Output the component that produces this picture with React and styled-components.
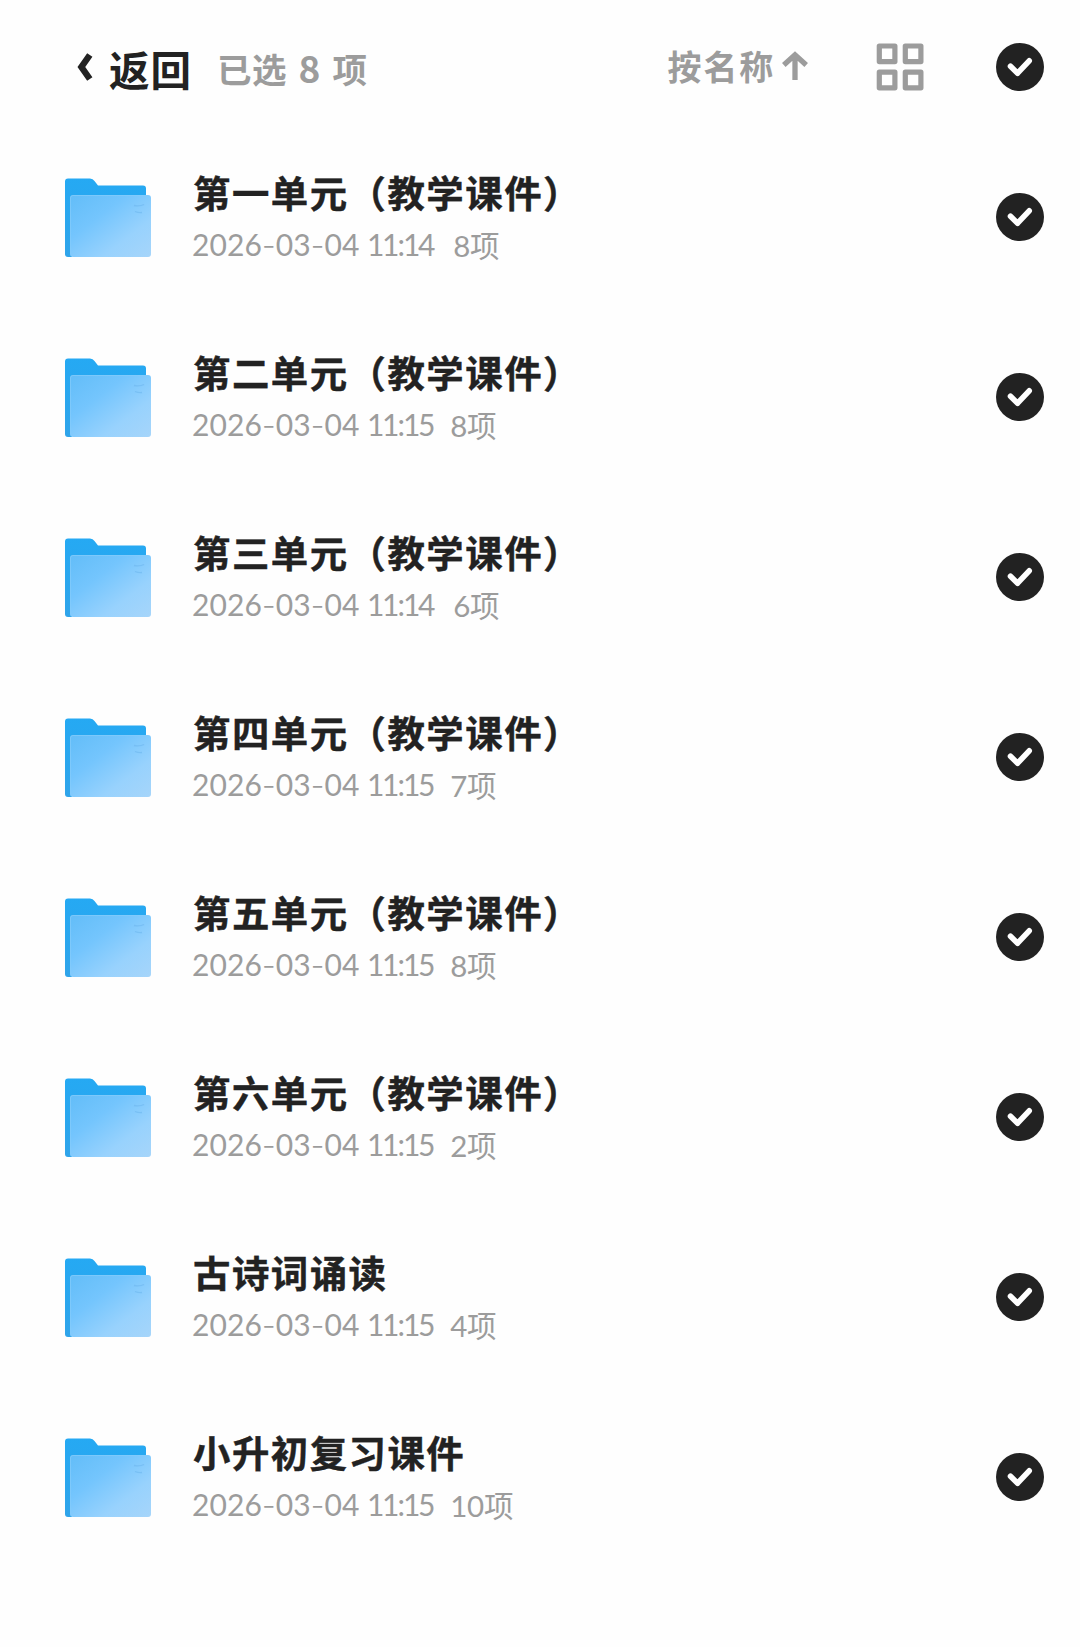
import React from "react";
import styled, { createGlobalStyle } from "styled-components";

const GlobalStyle = createGlobalStyle`
  body {
    margin: 0;
    background: #fefefe;
    font-family: "Noto Sans CJK SC", sans-serif;
    color: #222;
  }
`;

const Page = styled.main`
  box-sizing: border-box;
  width: 1080px;
  min-height: 1647px;
  padding: 0 36px 0 64px;
`;

const Header = styled.header`
  box-sizing: border-box;
  display: flex;
  align-items: center;
  height: 127px;
  padding-top: 7px;
`;

const BackButton = styled.button`
  display: flex;
  align-items: center;
  gap: 15px;
  margin: 0 0 0 13px;
  padding: 0;
  border: 0;
  background: none;
  color: inherit;
  font: 700 40.5px/56px "Noto Sans CJK SC", sans-serif;
  letter-spacing: 1px;
`;

const BackLabel = styled.span`
  padding-top: 4px;
`;

const Selected = styled.span`
  margin-left: 25px;
  padding-top: 1px;
  color: #9c9c9c;
  font: 700 34.5px/48px "Noto Sans CJK SC", sans-serif;
  letter-spacing: 0.5px;
  word-spacing: 3.2px;
`;

const SelectedNumber = styled.span`
  font-size: 37px;
`;

const SortButton = styled.button`
  display: flex;
  align-items: center;
  gap: 6px;
  margin: 0 67px 0 auto;
  padding: 0;
  border: 0;
  background: none;
  color: #9c9c9c;
  font: 700 34px/48px "Noto Sans CJK SC", sans-serif;
  letter-spacing: 1.8px;
`;

const SortLabel = styled.span`
  padding-bottom: 2px;
`;

const GridIcon = styled.svg`
  display: block;
  margin-right: 72px;
`;

const FolderIcon = styled.svg`
  display: block;
  margin-top: 2px;
`;

const List = styled.ul`
  margin: 0;
  padding: 0;
  list-style: none;
`;

const Row = styled.li`
  display: flex;
  align-items: center;
  height: 180px;
`;

const Info = styled.div`
  flex: 1;
  margin-left: 41px;
`;

const Title = styled.div`
  padding-bottom: 9px;
  font-size: 37.4px;
  font-weight: 700;
  line-height: 41px;
  letter-spacing: 1.5px;
  white-space: nowrap;
  -webkit-text-stroke: 0.4px currentColor;
`;

const Meta = styled.div`
  display: flex;
  align-items: baseline;
  height: 40px;
  color: #9c9c9c;
  font: 400 30px/44px Lato, "Noto Sans CJK SC", sans-serif;
  white-space: nowrap;
`;

const DateText = styled.span`
  width: 175px;
  margin-left: -1px;
  letter-spacing: 0.1px;
`;

const Dash = styled.span`
  font-family: Inter, sans-serif;
  font-weight: 300;
`;

const TimeText = styled.span`
  letter-spacing: -2.4px;
`;

const Colon = styled.span`
  margin: 0 0.6px 0 0.4px;
`;

const Count = styled.span`
  position: relative;
  top: 1px;
  margin-left: ${(p) => (p.$wide ? 20 : 17)}px;
  font-size: 29.5px;
  letter-spacing: -0.2px;
`;

const ROWS = [
  ["第一单元（教学课件）", "11:14", "8"],
  ["第二单元（教学课件）", "11:15", "8"],
  ["第三单元（教学课件）", "11:14", "6"],
  ["第四单元（教学课件）", "11:15", "7"],
  ["第五单元（教学课件）", "11:15", "8"],
  ["第六单元（教学课件）", "11:15", "2"],
  ["古诗词诵读", "11:15", "4"],
  ["小升初复习课件", "11:15", "10"],
];

function Check() {
  return (
    <svg width="48" height="48" viewBox="0 0 48 48">
      <circle cx="24" cy="24" r="24" fill="#222" />
      <path d="M14.5 23.2 21.6 30.2 33.2 17.8" fill="none" stroke="#fff" strokeWidth="5.6" strokeLinecap="round" strokeLinejoin="round" />
    </svg>
  );
}

function Folder() {
  return (
    <FolderIcon width="88" height="80" viewBox="0 0 88 80">
      <defs>
        <linearGradient id="back" x1="0" y1="0" x2="0" y2="1">
          <stop offset="0" stopColor="#25a9f3" />
          <stop offset="1" stopColor="#2fa4ea" />
        </linearGradient>
        <linearGradient id="front" x1="0" y1="0" x2="1" y2="1">
          <stop offset="0" stopColor="#62bdf8" />
          <stop offset="0.35" stopColor="#74c5fd" />
          <stop offset="0.7" stopColor="#98d2fd" />
          <stop offset="1" stopColor="#a6d5fa" />
        </linearGradient>
      </defs>
      <path d="M4 .5H26Q29 .5 30.5 3L34 7.5H79Q82 7.5 82 10.5V75H8V79H4Q1 79 1 76V3.5Q1 .5 4 .5Z" fill="url(#back)" />
      <rect x="6" y="17" width="81" height="62" rx="3" fill="url(#front)" />
      <path d="M6.5 76V20Q6.5 17.5 9 17.5H84" fill="none" stroke="#84ccfb" strokeWidth="1" opacity="0.7" />
      <path d="M70 27.5Q76 28.5 80 26.5M71 33.5Q75 35 78 34.5" fill="none" stroke="#70b9f0" strokeWidth="1.3" opacity="0.65" />
    </FolderIcon>
  );
}

function FileDate({ year, month, day }) {
  return (
    <DateText>
      {year}
      <Dash>-</Dash>
      {month}
      <Dash>-</Dash>
      {day}
    </DateText>
  );
}

function FileTime({ value }) {
  const [hour, minute] = value.split(":");
  return (
    <TimeText>
      {hour}
      <Colon>:</Colon>
      {minute}
    </TimeText>
  );
}

export default function App() {
  return (
    <Page>
      <GlobalStyle />
      <Header>
        <BackButton>
          <svg width="17" height="28" viewBox="0 0 17 28">
            <path d="M12.8 2 4.4 14 12.8 26" fill="none" stroke="#222" strokeWidth="6.4" />
          </svg>
          <BackLabel>返回</BackLabel>
        </BackButton>
        <Selected>
          已选 <SelectedNumber>8</SelectedNumber> 项
        </Selected>
        <SortButton>
          <SortLabel>按名称</SortLabel>
          <svg width="28" height="32" viewBox="0 0 28 32">
            <path d="M14 29V4M2.8 14 14 3.8 25.2 14" fill="none" stroke="#9c9c9c" strokeWidth="5.3" strokeLinecap="butt" strokeLinejoin="miter" />
          </svg>
        </SortButton>
        <GridIcon width="48" height="48" viewBox="0 0 48 48" fill="none" stroke="#9c9c9c" strokeWidth="5.2" strokeLinejoin="round">
          <rect x="3.3" y="3" width="15.6" height="15.6" />
          <rect x="29.3" y="3" width="15.6" height="15.6" />
          <rect x="3.3" y="29.2" width="15.6" height="15.6" />
          <rect x="29.3" y="29.2" width="15.6" height="15.6" />
        </GridIcon>
        <Check />
      </Header>
      <List>
        {ROWS.map(([title, time, count]) => (
          <Row key={title}>
            <Folder />
            <Info>
              <Title>{title}</Title>
              <Meta>
                <FileDate year="2026" month="03" day="04" />
                <FileTime value={time} />
                <Count $wide={time === "11:14"}>{count}项</Count>
              </Meta>
            </Info>
            <Check />
          </Row>
        ))}
      </List>
    </Page>
  );
}
